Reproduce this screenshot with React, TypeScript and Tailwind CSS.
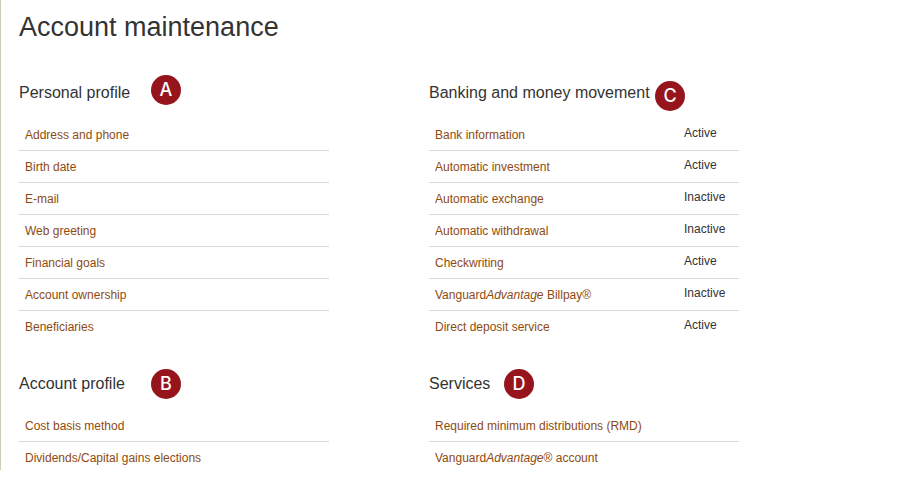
import type { ReactNode } from "react"

type Row = { label: ReactNode; status?: string }

const personalProfile: Row[] = [
  { label: "Address and phone" },
  { label: "Birth date" },
  { label: "E-mail" },
  { label: "Web greeting" },
  { label: "Financial goals" },
  { label: "Account ownership" },
  { label: "Beneficiaries" },
]

const banking: Row[] = [
  { label: "Bank information", status: "Active" },
  { label: "Automatic investment", status: "Active" },
  { label: "Automatic exchange", status: "Inactive" },
  { label: "Automatic withdrawal", status: "Inactive" },
  { label: "Checkwriting", status: "Active" },
  { label: <>Vanguard<i>Advantage</i> Billpay®</>, status: "Inactive" },
  { label: "Direct deposit service", status: "Active" },
]

const accountProfile: Row[] = [
  { label: "Cost basis method" },
  { label: "Dividends/Capital gains elections" },
]

const services: Row[] = [
  { label: "Required minimum distributions (RMD)" },
  { label: <>Vanguard<i>Advantage</i>® account</> },
]

type TitleProps = {
  title: string
  letter: string
  width: string
  align?: string
}

function SectionTitle({ title, letter, width, align = "self-center" }: TitleProps) {
  return (
    <div className="flex h-9 items-center">
      <h2 className={`${width} shrink-0 text-base text-[#333]`}>{title}</h2>
      <span
        className={`${align} flex size-[30px] items-center justify-center rounded-full bg-[#96141c] font-[Inter,sans-serif] text-lg leading-none font-medium text-white`}
      >
        {letter}
      </span>
    </div>
  )
}

function LinkList({ rows }: { rows: Row[] }) {
  return (
    <ul className="mt-2 divide-y divide-[#d8d8d8]">
      {rows.map((row, i) => (
        <li key={i} className="flex items-start justify-between pt-2 pb-[7px] pl-1.5 leading-4 last:pb-1">
          <a href="#" className="text-[#8f4a10] hover:underline">{row.label}</a>
          {row.status && <span className="w-[55px] leading-3 text-[#333]">{row.status}</span>}
        </li>
      ))}
    </ul>
  )
}

export default function App() {
  return (
    <div className="bg-white pb-2.5 font-['Liberation_Sans',Arial,sans-serif] text-xs">
      <main className="border-l border-[#d0cab8] pt-[9px] pl-[18px]">
        <h1 className="text-[27px] leading-9 text-[#333]">Account maintenance</h1>
        <div className="mt-[30px] grid max-w-[720px] grid-cols-2 gap-x-[100px] gap-y-[27px]">
          <section>
            <SectionTitle title="Personal profile" letter="A" width="w-[132px]" align="self-start" />
            <LinkList rows={personalProfile} />
          </section>
          <section>
            <SectionTitle title="Banking and money movement" letter="C" width="w-[226px]" align="self-end" />
            <LinkList rows={banking} />
          </section>
          <section>
            <SectionTitle title="Account profile" letter="B" width="w-[132px]" />
            <LinkList rows={accountProfile} />
          </section>
          <section>
            <SectionTitle title="Services" letter="D" width="w-[75px]" />
            <LinkList rows={services} />
          </section>
        </div>
      </main>
    </div>
  )
}
